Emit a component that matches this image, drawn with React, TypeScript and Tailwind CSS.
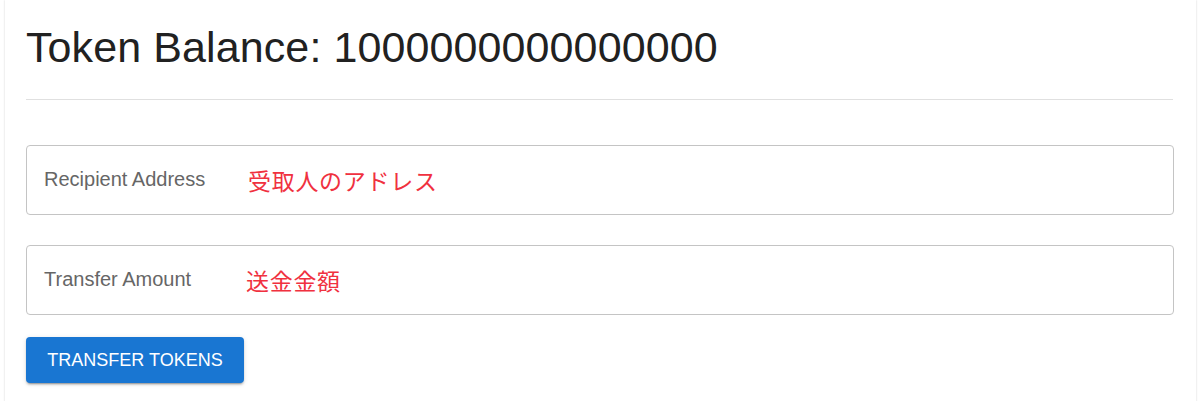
import React from "react";

function Field({ label, note, labelWidth }: { label: string; note: string; labelWidth: string }) {
  return (
    <div className="flex h-[70px] items-center rounded-[4px] border border-[#c4c4c4] bg-white pl-[17px]">
      <span className={`${labelWidth} mb-[2px] shrink-0 text-[20px] leading-[24px] text-[#666666]`}>{label}</span>
      <span
        className="text-[23px] leading-[28px] tracking-[0.7px] text-[#f0313f]"
        style={{ fontFamily: '"Noto Sans CJK JP", "Noto Sans CJK SC", sans-serif' }}
      >
        {note}
      </span>
    </div>
  );
}

export default function App() {
  return (
    <div
      className="h-[401px] w-[1204px] overflow-hidden bg-white px-[5px]"
      style={{ fontFamily: '"Liberation Sans", Arial, sans-serif' }}
    >
      <div className="mr-[3px] h-[420px] bg-white px-[21px] pt-[21px] shadow-[0_0_2px_rgba(0,0,0,0.18)]">
        <h1 className="text-[43px] font-normal leading-[52px] tracking-[0.1px] text-[#212121]">Token Balance: 1000000000000000</h1>
        <div className="mt-[26px] h-px w-[1147px] bg-[#e0e0e0]" />
        <div className="mt-[45px] flex w-[1148px] flex-col gap-[30px]">
          <Field label="Recipient Address" note="受取人のアドレス" labelWidth="w-[204px]" />
          <Field label="Transfer Amount" note="送金金額" labelWidth="w-[202px]" />
        </div>
        <button className="mt-[22px] flex h-[46px] w-[218px] items-center justify-center rounded-[4px] bg-[#1976d2] text-[18px] leading-[22px] text-white shadow-[0_3px_1px_-2px_rgba(0,0,0,0.2),0_2px_2px_0_rgba(0,0,0,0.14),0_1px_5px_0_rgba(0,0,0,0.12)]">
          TRANSFER TOKENS
        </button>
      </div>
    </div>
  );
}
